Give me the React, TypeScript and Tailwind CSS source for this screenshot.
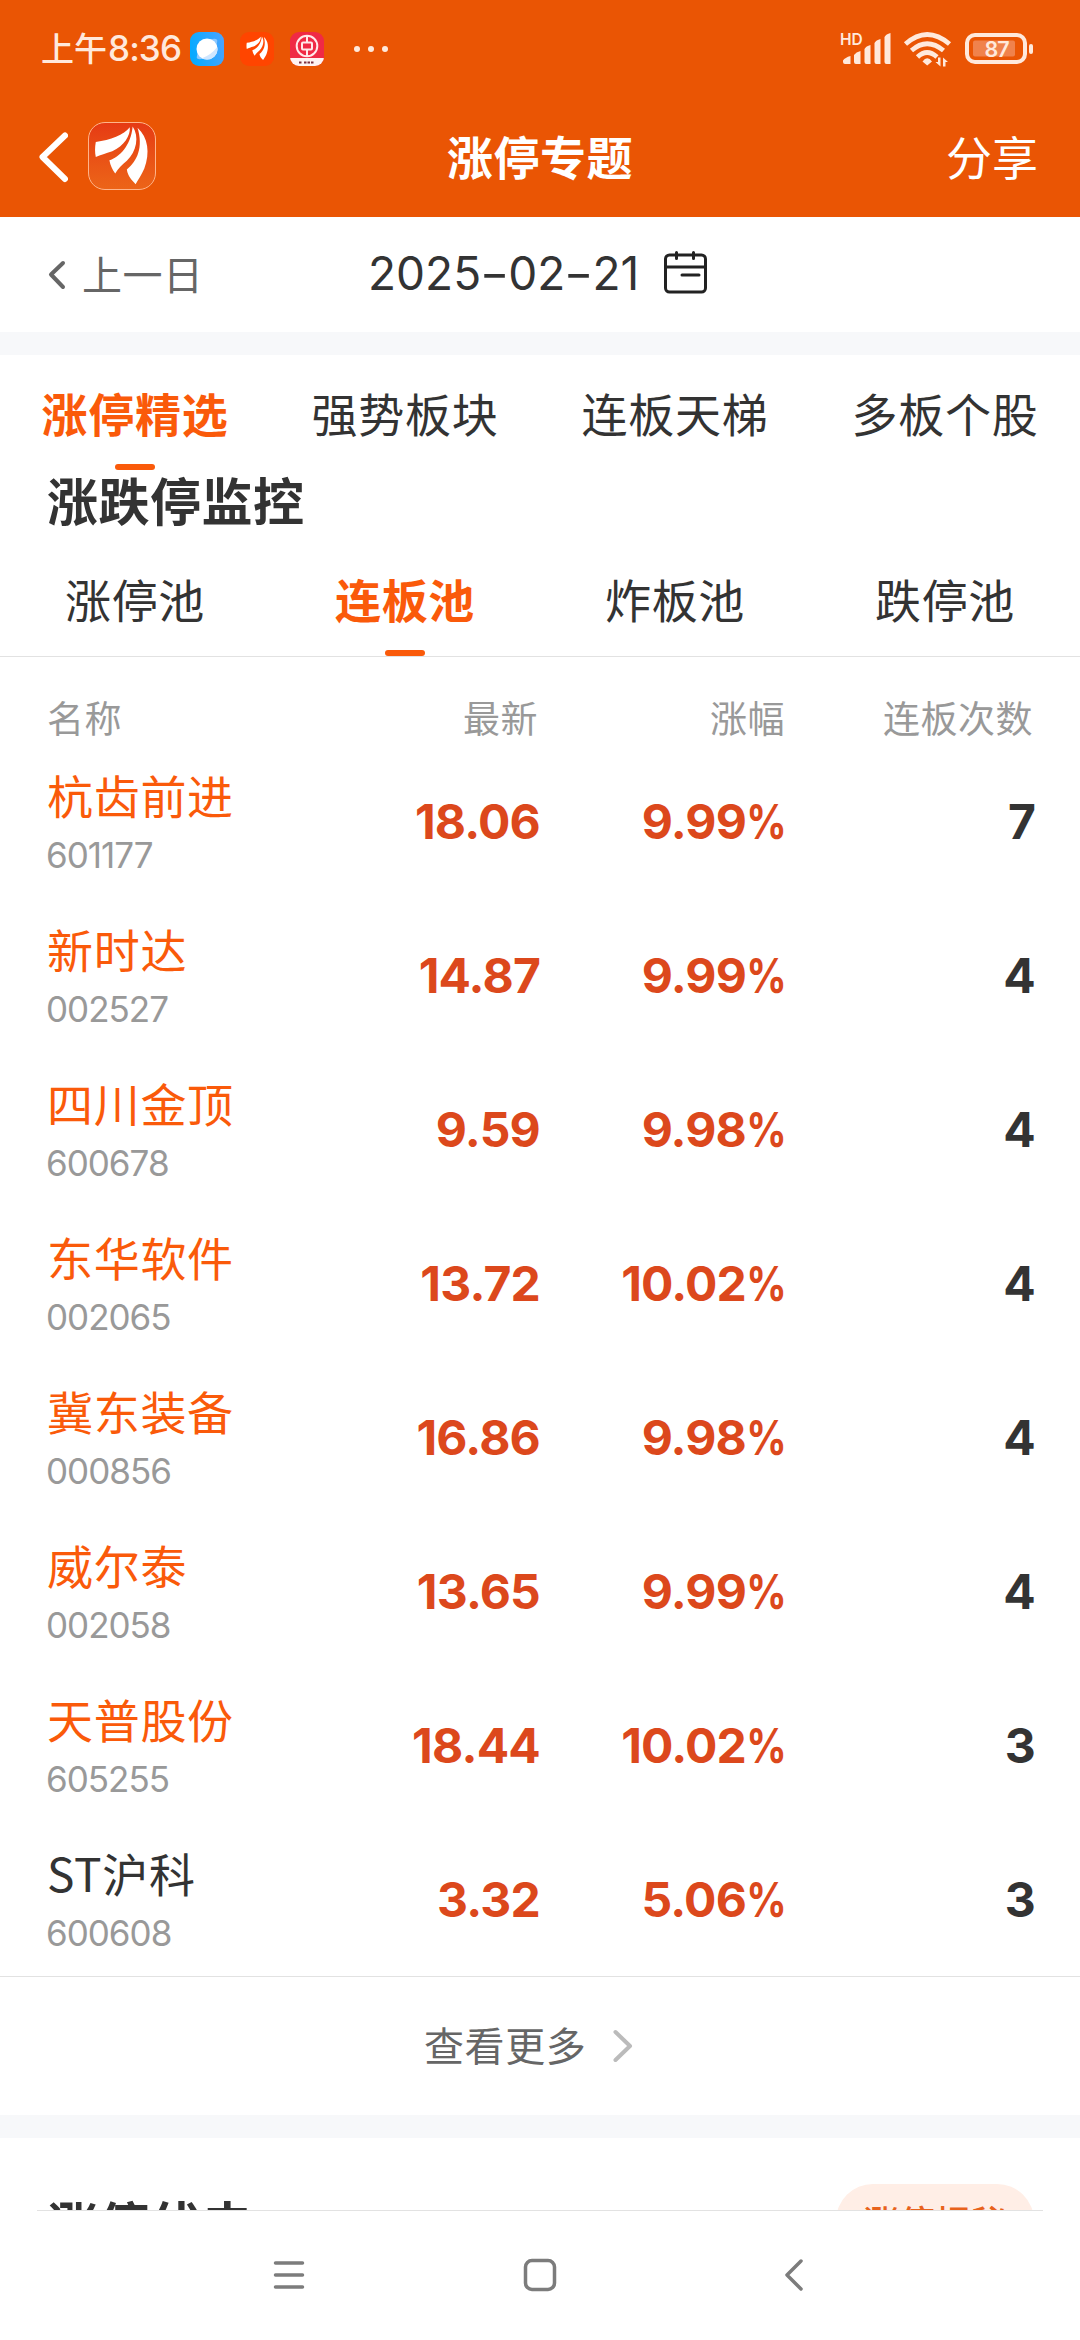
import React from 'react';

interface Stock {
  name: string;
  code: string;
  price: string;
  change: string;
  times: number;
  plain?: boolean;
}

const STOCKS: Stock[] = [
  { name: '杭齿前进', code: '601177', price: '18.06', change: '9.99', times: 7 },
  { name: '新时达', code: '002527', price: '14.87', change: '9.99', times: 4 },
  { name: '四川金顶', code: '600678', price: '9.59', change: '9.98', times: 4 },
  { name: '东华软件', code: '002065', price: '13.72', change: '10.02', times: 4 },
  { name: '冀东装备', code: '000856', price: '16.86', change: '9.98', times: 4 },
  { name: '威尔泰', code: '002058', price: '13.65', change: '9.99', times: 4 },
  { name: '天普股份', code: '605255', price: '18.44', change: '10.02', times: 3 },
  { name: 'ST沪科', code: '600608', price: '3.32', change: '5.06', times: 3, plain: true },
];

const MAIN_TABS = ['涨停精选', '强势板块', '连板天梯', '多板个股'];
const POOL_TABS = ['涨停池', '连板池', '炸板池', '跌停池'];

const FeatherMark: React.FC<{ className?: string }> = ({ className }) => (
  <svg className={className} viewBox="0 0 68 68" fill="#fff">
    <path d="M7 19.500C22 18 36 12 42 4.500C43 13 36 24 24 29C17 31 12 33 7 35C6 30 6 25 7 19.500Z" />
    <path d="M45 3.500C52 14 49 29 39 39C34 43 30 47 27 52C24 48 22 44 21 38.500C31 35 43 24 45 3.500Z" />
    <path d="M50 5C61 15 63 31 57 47C54 54 51 58 48 63C44 59 40 55 39 48C50 39 56 25 50 5Z" />
  </svg>
);

const StatusBar: React.FC = () => (
  <div className="flex h-[97px] items-center pl-[41px] pr-[47px] text-[#ffe9dc]">
    <span className="pb-[2px] text-[33px] font-medium leading-none">上午</span>
    <span className="ml-[1px] w-[73px] font-[Inter] text-[35px] font-medium leading-none tracking-[-0.9px]">8:36</span>
    <div className="ml-[9px] flex items-center gap-4">
      <svg className="size-[34px]" viewBox="0 0 34 34">
        <defs>
          <linearGradient id="browser" x1="0" y1="0.3" x2="1" y2="0.1">
            <stop offset="0" stopColor="#08aaff" />
            <stop offset="1" stopColor="#4aa4ff" />
          </linearGradient>
        </defs>
        <rect width="34" height="34" rx="9" fill="url(#browser)" />
        <path d="M20 7.500Q27 5.500 27.300 8.500T25 15ZM14 26.500Q7 28.500 6.700 25.500T9 19Z" fill="#8cc8ff" />
        <circle cx="17" cy="17" r="10.500" fill="#fff" />
        <path d="M27.300 15A10.500 10.500 0 0 1 12 26.200Q21 23 27.300 15Z" fill="#cfe6ff" />
      </svg>
      <div className="flex size-[34px] items-center justify-center rounded-[9px] bg-[#ff4500]">
        <FeatherMark className="size-[27px]" />
      </div>
      <svg className="size-[34px]" viewBox="0 0 34 34">
        <defs>
          <clipPath id="bank">
            <rect width="34" height="34" rx="9" />
          </clipPath>
        </defs>
        <g clipPath="url(#bank)">
          <rect width="34" height="34" fill="#f02a45" />
          <rect y="26" width="34" height="8" fill="#fff3f2" />
        </g>
        <g fill="none" stroke="#ffe9ea" strokeWidth="2">
          <circle cx="17" cy="14" r="10.300" />
          <rect x="12" y="10.500" width="10" height="7" rx="1" />
          <path d="M17 4v6.500M17 17.500V24" />
        </g>
        <path d="M9 30.500h3M14 30.500h10" stroke="#7d3040" strokeWidth="2" strokeDasharray="2.500 1" />
      </svg>
    </div>
    <div className="ml-[30px] flex gap-2">
      <i className="size-1.5 rounded-full bg-[#ffe9dc]" />
      <i className="size-1.5 rounded-full bg-[#ffe9dc]" />
      <i className="size-1.5 rounded-full bg-[#ffe9dc]" />
    </div>
    <div className="flex-1" />
    <svg className="h-[36px] w-[194px]" viewBox="-2 0 194 36" fill="#ffe9dc">
      <text x="-1" y="13.500" fontFamily="Inter" fontSize="15.500" fontWeight="600">HD</text>
      <path d="M2 29.500Q4 26.500 9.500 25V33H4Q2 33 2 31ZM13 24Q15 21 19.500 20V33H15Q13 33 13 31ZM23.500 18Q25 15 29.500 14V33H25.500Q23.500 33 23.500 31ZM33.500 12Q35 9 39.500 8V33H35.500Q33.500 33 33.500 31ZM43.500 6Q45 3 49.500 2V33H45.500Q43.500 33 43.500 31Z" />
      <g fill="none" stroke="#ffe9dc" strokeWidth="4.800">
        <path d="M64.500 13Q86-6 108.500 13" />
        <path d="M70.500 19.500Q86 6 102.500 19.500" />
        <path d="M76.500 26Q86 17 96 26" />
      </g>
      <path d="M81.500 30.500Q86.200 24 91 30.500L86.200 34.500Z" />
      <path d="M99.500 26.500v9l-5-4.500h2.500V26.500ZM102 35.500v-9l5 4.500h-2.500V35.500Z" />
      <rect x="126" y="4" width="58" height="27" rx="8" fill="none" stroke="#ffe9dc" strokeWidth="4" />
      <rect x="132" y="9.500" width="42" height="16" rx="2" fill="#f0824c" />
      <rect x="188" y="13" width="4" height="10" rx="2" />
      <text x="155.500" y="25.500" textAnchor="middle" fontFamily="Inter" fontSize="21.500" fontWeight="600" letterSpacing="-1">87</text>
    </svg>
  </div>
);

const TitleBar: React.FC = () => (
  <div className="grid h-[120px] grid-cols-3 items-center px-[38px] text-[46px] text-white">
    <div className="flex items-center">
      <svg className="h-[52px] w-[30px]" viewBox="0 0 30 52" fill="none" stroke="#fff" strokeWidth="6" strokeLinecap="round" strokeLinejoin="round">
        <path d="M27 4.500L4.500 26L27 48" />
      </svg>
      <div className="mb-[2px] ml-[20px] size-[68px] rounded-[17px] border border-[#ffb48a] bg-linear-to-b from-[#e63a14] to-[#ec6418]">
        <FeatherMark className="size-full" />
      </div>
    </div>
    <h1 className="pb-[3px] text-center font-bold tracking-[0.5px]">涨停专题</h1>
    <span className="pb-[3px] pr-[4px] text-right">分享</span>
  </div>
);

const DateDash: React.FC = () => <span className="mx-[3px] inline-block scale-x-[1.4]">-</span>;

const DateBar: React.FC = () => (
  <div className="flex h-[115px] items-center pl-[48px]">
    <svg className="h-[30px] w-[18px]" viewBox="0 0 18 30" fill="none" stroke="#666" strokeWidth="4" strokeLinecap="round" strokeLinejoin="round">
      <path d="M15 3L3 14.500L15 27" />
    </svg>
    <span className="ml-[16px] w-[286px] pb-[4px] text-[40px] tracking-[0.5px] text-[#666]">上一日</span>
    <span className="w-[295px] pb-[2px] font-[Inter] text-[46px] text-[#333]">
      2025<DateDash />02<DateDash />21
    </span>
    <svg className="mb-[3px] h-[44px] w-[44px]" viewBox="0 0 44 44" fill="none" stroke="#222" strokeWidth="3" strokeLinecap="round">
      <rect x="2.500" y="4" width="40" height="37" rx="4" />
      <path d="M2.500 16H42.500M13.500 1.500v6M30.500 1.500v6M19 24H36" />
    </svg>
  </div>
);

const Tabs: React.FC<{ items: string[]; active: number }> = ({ items, active }) => (
  <div className="grid h-[115px] grid-cols-4 pt-[23px] text-center text-[46px] tracking-[0.7px] text-[#333]">
    {items.map((item, i) => (
      <div key={item} className={`flex flex-col items-center justify-between ${i === active ? 'font-bold text-[#fa5a0a]' : ''}`}>
        <span className="leading-[68px]">{item}</span>
        {i === active && <i className="h-[6px] w-[40px] rounded-full bg-[#fa5a0a]" />}
      </div>
    ))}
  </div>
);

const StockRow: React.FC<{ stock: Stock }> = ({ stock }) => (
  <div className="grid h-[154px] grid-cols-[251px_240px_247px_248px] items-center text-right font-[Inter] text-[48px] font-bold tracking-[-0.8px] text-[#dc481c]">
    <div className="flex flex-col gap-1 text-left font-normal">
      <span className={`font-['Noto_Sans_CJK_SC'] text-[46px] leading-[64px] tracking-[0.7px] ${stock.plain ? 'text-[#333]' : 'text-[#fa5a0a]'}`}>
        {stock.name}
      </span>
      <span className="-ml-[1px] text-[35px] leading-[50px] tracking-[-1px] text-[#999]">{stock.code}</span>
    </div>
    <span className="-mr-[2px] pt-[2px]">{stock.price}</span>
    <span className="-mr-[1px] pt-[2px]">
      {stock.change}
      <span className="-ml-[8px] inline-block origin-right scale-x-[0.83]">%</span>
    </span>
    <span className="-mr-[2px] pt-[2px] text-[#333]">{stock.times}</span>
  </div>
);

const NavBar: React.FC = () => (
  <div className="flex h-[129px] items-start bg-white pl-[272px] pt-[47px]">
    <svg className="h-[34px] w-[534px]" viewBox="0 0 534 34" fill="none" stroke="#7c7c7c" strokeWidth="3.500" strokeLinecap="round" strokeLinejoin="round">
      <path d="M3.500 5H30.500M3.500 17H30.500M3.500 29H30.500" />
      <rect x="253.500" y="2.500" width="29" height="29" rx="6.500" />
      <path d="M529 3L515 17L529 31" />
    </svg>
  </div>
);

export default function App() {
  return (
    <div className="flex h-[2340px] w-[1080px] flex-col overflow-hidden bg-white font-['Noto_Sans_CJK_SC',sans-serif]">
      <header className="h-[217px] bg-[#ea5504]">
        <StatusBar />
        <TitleBar />
      </header>
      <DateBar />
      <div className="h-[23px] bg-[#f7f8fa]" />

      <Tabs items={MAIN_TABS} active={0} />

      {/* 涨跌停监控 */}
      <h2 className="h-[71px] pl-[47px] text-[51px] font-bold leading-[59px] tracking-[0.5px] text-[#333]">涨跌停监控</h2>
      <Tabs items={POOL_TABS} active={1} />
      <div className="h-px bg-[#e2e2e2]" />
      <div className="px-[47px]">
        <div className="grid h-[87px] grid-cols-[251px_240px_247px_248px] pt-[32px] text-right text-[37px] leading-[56px] tracking-[0.5px] text-[#999]">
          <span className="text-left">名称</span>
          <span>最新</span>
          <span>涨幅</span>
          <span>连板次数</span>
        </div>
        {STOCKS.map((stock) => (
          <StockRow key={stock.code} stock={stock} />
        ))}
      </div>
      <div className="h-px bg-[#e2e2e2]" />
      <div className="flex h-[138px] items-center pl-[424px] text-[40px] text-[#666]">
        <span className="w-[189px] pb-[4px] tracking-[0.6px]">查看更多</span>
        <svg className="h-[34px] w-[20px]" viewBox="0 0 20 34" fill="none" stroke="#bbb" strokeWidth="4" strokeLinecap="round" strokeLinejoin="round">
          <path d="M2.500 3L17 17L2.500 31" />
        </svg>
      </div>
      <div className="h-[23px] bg-[#f7f8fa]" />

      {/* 下一个板块，被底部导航遮住 */}
      <div className="flex h-[72px] items-start justify-between overflow-hidden pl-[47px] pr-[46px]">
        <span className="mt-[54px] text-[51px] font-bold leading-[63px] tracking-[0.5px] text-[#333]">涨停伏击</span>
        <span className="mt-[46px] flex h-[74px] w-[198px] shrink-0 items-center justify-center rounded-full bg-[#ffeee6] text-[36px] font-medium text-[#e8621c]">
          涨停揭秘
        </span>
      </div>
      <div className="mx-[37px] h-px bg-[#e2e2e2]" />
      <NavBar />
    </div>
  );
}
